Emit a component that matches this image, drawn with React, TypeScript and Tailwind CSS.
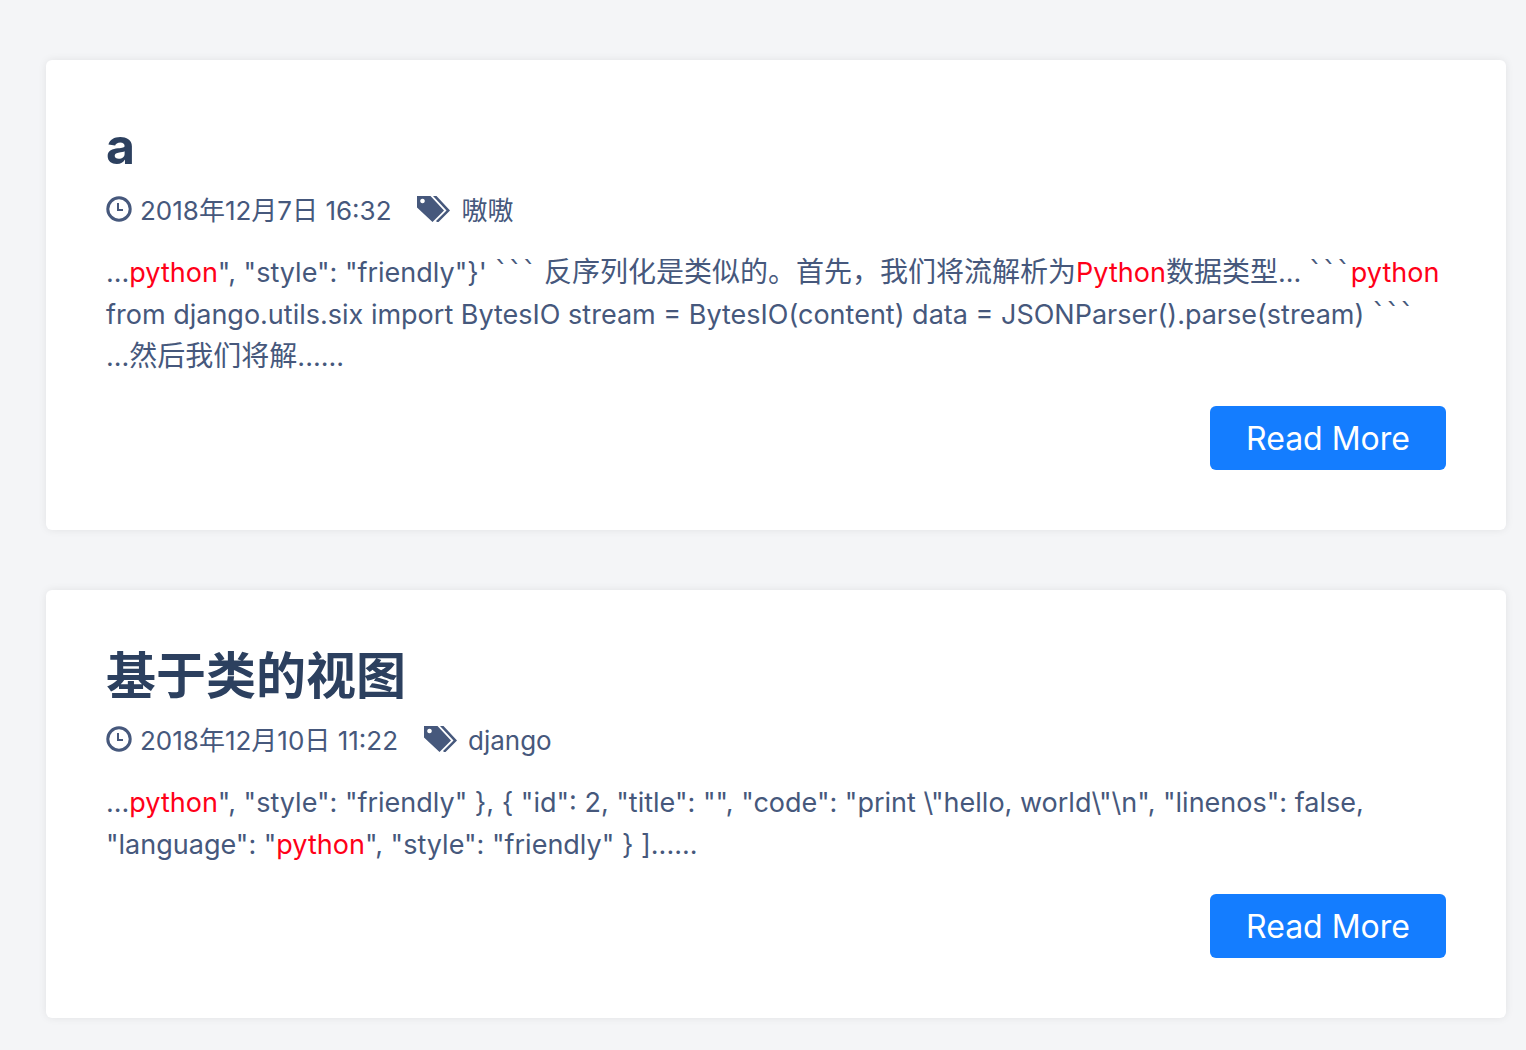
import type { ReactNode } from "react";

type Post = {
  title: string;
  date: string;
  tag: string;
  excerpt: ReactNode;
};

function Mark({ children }: { children: ReactNode }) {
  return <span className="text-[#ff0018]">{children}</span>;
}

// Chinese runs are set slightly larger than the latin text
function Zh({ children }: { children: ReactNode }) {
  return <span className="text-[28px] leading-none">{children}</span>;
}

function Fence() {
  return <span className="font-['DejaVu_Sans',sans-serif] text-[28px] leading-none">```</span>;
}

function ClockIcon() {
  return (
    <svg viewBox="0 0 26 26" className="size-[26px]" fill="none" stroke="currentColor" aria-hidden="true">
      <circle cx="13" cy="13" r="11.2" strokeWidth="3" />
      <path d="M12 7v7h5" strokeWidth="2" />
    </svg>
  );
}

function TagsIcon() {
  return (
    <svg viewBox="0 0 33 26" className="h-[26px] w-[33px]" fill="currentColor" aria-hidden="true">
      <path fillRule="evenodd" d="M0 0h13.500L27 14.500 15.500 26 0 11.500zM5.500 2.700a2.300 2.300 0 1 0 .01 0z" />
      <path d="M16 0h3.500L33 14.500 21.500 26h-1.500l-1-1 10.500-10.500z" />
    </svg>
  );
}

const posts: Post[] = [
  {
    title: "a",
    date: "2018年12月7日 16:32",
    tag: "嗷嗷",
    excerpt: (
      <>
        ...<Mark>python</Mark>", "style": "friendly"{"}"}' <Fence /> <Zh>反序列化是类似的。首先，我们将流解析为</Zh>
        <Mark>Python</Mark>
        <Zh>数据类型</Zh>... <Fence />
        <Mark>python</Mark>
        <br />
        from django.utils.six import BytesIO stream = BytesIO(content) data = JSONParser().parse(stream) <Fence />
        <br />
        ...<Zh>然后我们将解</Zh>......
      </>
    ),
  },
  {
    title: "基于类的视图",
    date: "2018年12月10日 11:22",
    tag: "django",
    excerpt: (
      <>
        ...<Mark>python</Mark>
        {'", "style": "friendly" }, { "id": 2, "title": "", "code": "print \\"hello, world\\"\\n", "linenos": false,'}
        <br />
        "language": "<Mark>python</Mark>
        {'", "style": "friendly" } ]......'}
      </>
    ),
  },
];

function PostCard({ post }: { post: Post }) {
  return (
    <article className="rounded-md bg-white px-[60px] pt-[58px] pb-[60px] shadow-[0_0_8px_rgba(0,0,0,0.08)]">
      <h2 className="text-[50px] leading-[56px] font-bold text-[#2c405f]">{post.title}</h2>
      <div className="mt-4 flex h-[38px] items-center text-[26px] leading-9">
        <ClockIcon />
        <time className="mt-1 ml-2">{post.date}</time>
        <span className="ml-[26px]">
          <TagsIcon />
        </span>
        <span className="mt-1 ml-[11px]">{post.tag}</span>
      </div>
      <p className="mt-6 text-[27px] leading-[42px]">{post.excerpt}</p>
      <div className="mt-7 flex justify-end">
        <a
          href="#"
          className="flex h-16 w-[236px] items-center justify-center rounded-md bg-[#147dff] pt-[2px] text-[32px] text-white"
        >
          Read More
        </a>
      </div>
    </article>
  );
}

export default function App() {
  return (
    <main className="flex min-h-screen flex-col gap-[60px] bg-[#f4f5f7] pt-[60px] pr-5 pb-8 pl-[46px] font-['Inter','Noto_Sans_CJK_SC',sans-serif] text-[#46587c]">
      {posts.map((post) => (
        <PostCard key={post.title} post={post} />
      ))}
    </main>
  );
}
